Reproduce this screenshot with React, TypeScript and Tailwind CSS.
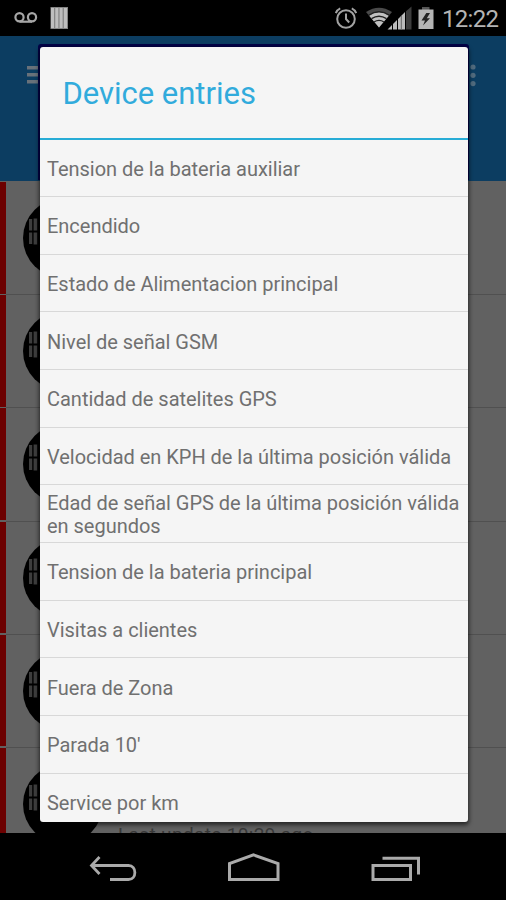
const entries = [
  'Tension de la bateria auxiliar',
  'Encendido',
  'Estado de Alimentacion principal',
  'Nivel de señal GSM',
  'Cantidad de satelites GPS',
  'Velocidad en KPH de la última posición válida',
  'Edad de señal GPS de la última posición válida en segundos',
  'Tension de la bateria principal',
  'Visitas a clientes',
  'Fuera de Zona',
  "Parada 10'",
  'Service por km',
];

function StatusBar() {
  return (
    <header className="flex h-9 shrink-0 items-center justify-between bg-black pl-[14px] pr-[7px]">
      <div className="flex items-center gap-[12px]">
        <svg width="24" height="14" viewBox="0 0 24 14" fill="none" stroke="#a6a6a6" strokeWidth="2.2">
          <circle cx="5.5" cy="6.2" r="4.1" />
          <circle cx="18" cy="6.2" r="4.1" />
          <path d="M5.5 10.7H18" />
        </svg>
        <svg width="18" height="22" viewBox="0 0 18 22">
          <path fill="#858585" d="M0.5 0H18V22H0.5z" />
          <path fill="#bebebe" d="M1 1H4V21H1zM5.3 1H8.3V21H5.3zM9.6 1H12.6V21H9.6zM13.9 1H17V21H13.9z" />
        </svg>
      </div>
      <div className="flex items-center">
        <svg width="24" height="24" viewBox="0 0 24 24" fill="none" stroke="#a2a2a2" strokeWidth="2">
          <circle cx="12" cy="13" r="8.8" />
          <path d="M12 7.5V13L15.2 16.5M1.8 7.2C2.6 5 4 3.4 6.2 2.4M22.2 7.2C21.4 5 20 3.4 17.8 2.4" />
        </svg>
        <svg className="ml-[8px]" width="46" height="24" viewBox="0 0 46 24">
          <path fill="#4a4a4a" d="M0 6Q13 -2.5 26 6L13 21.5z" />
          <path fill="#c2c2c2" d="M3 9.5Q13 2.5 23 9.5L13 21.5z" />
          <path fill="none" stroke="#222" strokeWidth="1.4" d="M2.5 9.3Q13 2.3 23.5 9.3M5.5 12.7Q13 7.8 20.5 12.7M8 16Q13 12.8 18 16" />
          <path fill="#bbb" d="M21.5 23.5L26 19V23.5zM27 18L31 14V23.5H27zM32 13L39 6V23.5H32z" />
          <path fill="#3d3d3d" d="M40 5.3L45.5 0.5V23.5H40z" />
          <path stroke="#666" strokeWidth="1" d="M35.3 10V23.5" />
        </svg>
        <svg className="ml-[6px]" width="16" height="23" viewBox="0 0 16 23">
          <path fill="#555" d="M4 0H11.5V3H4z" />
          <path fill="#b4b4b4" d="M0.5 2.5H15.5V22H0.5z" />
          <path fill="#222" d="M8.3 6L3.5 13.5H7L5 18.5L12 11.2H8.8L12 6z" />
        </svg>
        <span className="ml-[8px] w-[57px] whitespace-nowrap pt-[2px] text-[24px] leading-[34px] tracking-[-0.7px] text-[#b4b4b4]">12:22</span>
      </div>
    </header>
  );
}

function DeviceRow({ last = false }: { last?: boolean }) {
  return (
    <div className="flex h-[113.2px] shrink-0">
      <div className="h-[111.7px] w-[6px] bg-[#6c0000]" />
      <div className="flex h-full flex-1 border-b border-[#505050]">
        <div className="ml-[17px] mt-[16px] h-20 w-20 shrink-0 rounded-full bg-black pl-[5px] pt-[20px]">
          <svg width="14" height="28" viewBox="0 0 14 28">
            <path fill="#3d3d3d" d="M1 1H4.2V12.5H1zM5.6 0.5H9.2V12.5H5.6zM1 14.5H4.2V26H1zM5.6 14.5H9.2V26.5H5.6z" />
          </svg>
        </div>
        {last && (
          <span className="ml-[15px] mt-[75px] whitespace-nowrap text-[19px] leading-6 tracking-[0.35px] text-[#383838]">Last update 10:29 ago</span>
        )}
      </div>
    </div>
  );
}

function Background() {
  return (
    <div className="absolute inset-0 overflow-hidden bg-[#616161]">
      <div className="flex h-[144.5px] items-start justify-between bg-[#0c3d61] pl-[27px] pr-[30px]">
        <svg className="mt-[30px]" width="26" height="18" viewBox="0 0 26 18">
          <path fill="#68717a" d="M0 0H26V3.5H0zM0 7H26V10.5H0zM0 14H26V17.5H0z" />
        </svg>
        <svg className="mt-[28px]" width="6" height="24" viewBox="0 0 6 24" fill="#506a7d">
          <circle cx="3" cy="3" r="2.6" />
          <circle cx="3" cy="11.3" r="2.6" />
          <circle cx="3" cy="19.6" r="2.6" />
        </svg>
      </div>
      <div className="flex flex-col pt-[1.5px]">
        <DeviceRow />
        <DeviceRow />
        <DeviceRow />
        <DeviceRow />
        <DeviceRow />
        <DeviceRow last />
      </div>
    </div>
  );
}

function Dialog() {
  return (
    <section className="relative ml-[39.5px] mt-[10.5px] flex h-[775.5px] w-[428px] flex-col overflow-hidden rounded-[3px] bg-[#f5f5f5] shadow-[0_2px_4px_1px_rgba(0,0,0,0.6)]">
      <h1 className="h-[93px] shrink-0 border-b-2 border-[#27acd6] pl-[23px] text-[31px] font-normal leading-[94px] tracking-[-0.02px] text-[#31abdc]">
        <span className="whitespace-nowrap">Device entries</span>
      </h1>
      <ul>
        {entries.map((entry) => (
          <li key={entry} className="flex h-[57.67px] items-center border-b border-[#d8d8d8] pl-[7.5px] pr-[5px] pt-[3px] text-[20px] leading-[23px] tracking-[-0.02px] text-[#707070]">
            <span>{entry}</span>
          </li>
        ))}
      </ul>
    </section>
  );
}

function NavigationBar() {
  return (
    <nav className="flex h-[67px] shrink-0 items-start bg-black pl-[89px] pt-[20px]">
      <svg width="48" height="30" viewBox="0 0 48 30" fill="none" stroke="#aaa" strokeWidth="2.8">
        <path d="M10.5 4L2.5 12.5L10.5 21M2.5 12.5H39.5C48 12.5 48 26.5 39.5 26.5H21" />
      </svg>
      <svg className="ml-[89px]" width="56" height="30" viewBox="0 0 56 30" fill="none" stroke="#aaa" strokeWidth="3">
        <path d="M3.5 26.5V10.5L27.5 1.9L52 10.5V26.5z" />
      </svg>
      <svg className="ml-[88px]" width="52" height="30" viewBox="0 0 52 30" fill="none" stroke="#aaa" strokeWidth="3">
        <path d="M3 12.5H40.5V26.5H3zM12.5 5.2H48.5V21.5" />
      </svg>
    </nav>
  );
}

export default function App() {
  return (
    <div className="flex h-[900px] w-[506px] flex-col overflow-hidden bg-black font-[Roboto,sans-serif]">
      <StatusBar />
      <main className="relative flex min-h-0 flex-1 flex-col overflow-hidden">
        <Background />
        <div className="absolute left-[38px] top-[8px] h-[136px] w-[431px] rounded-t-[3px] bg-[#030248]" />
        <Dialog />
      </main>
      <NavigationBar />
    </div>
  );
}
